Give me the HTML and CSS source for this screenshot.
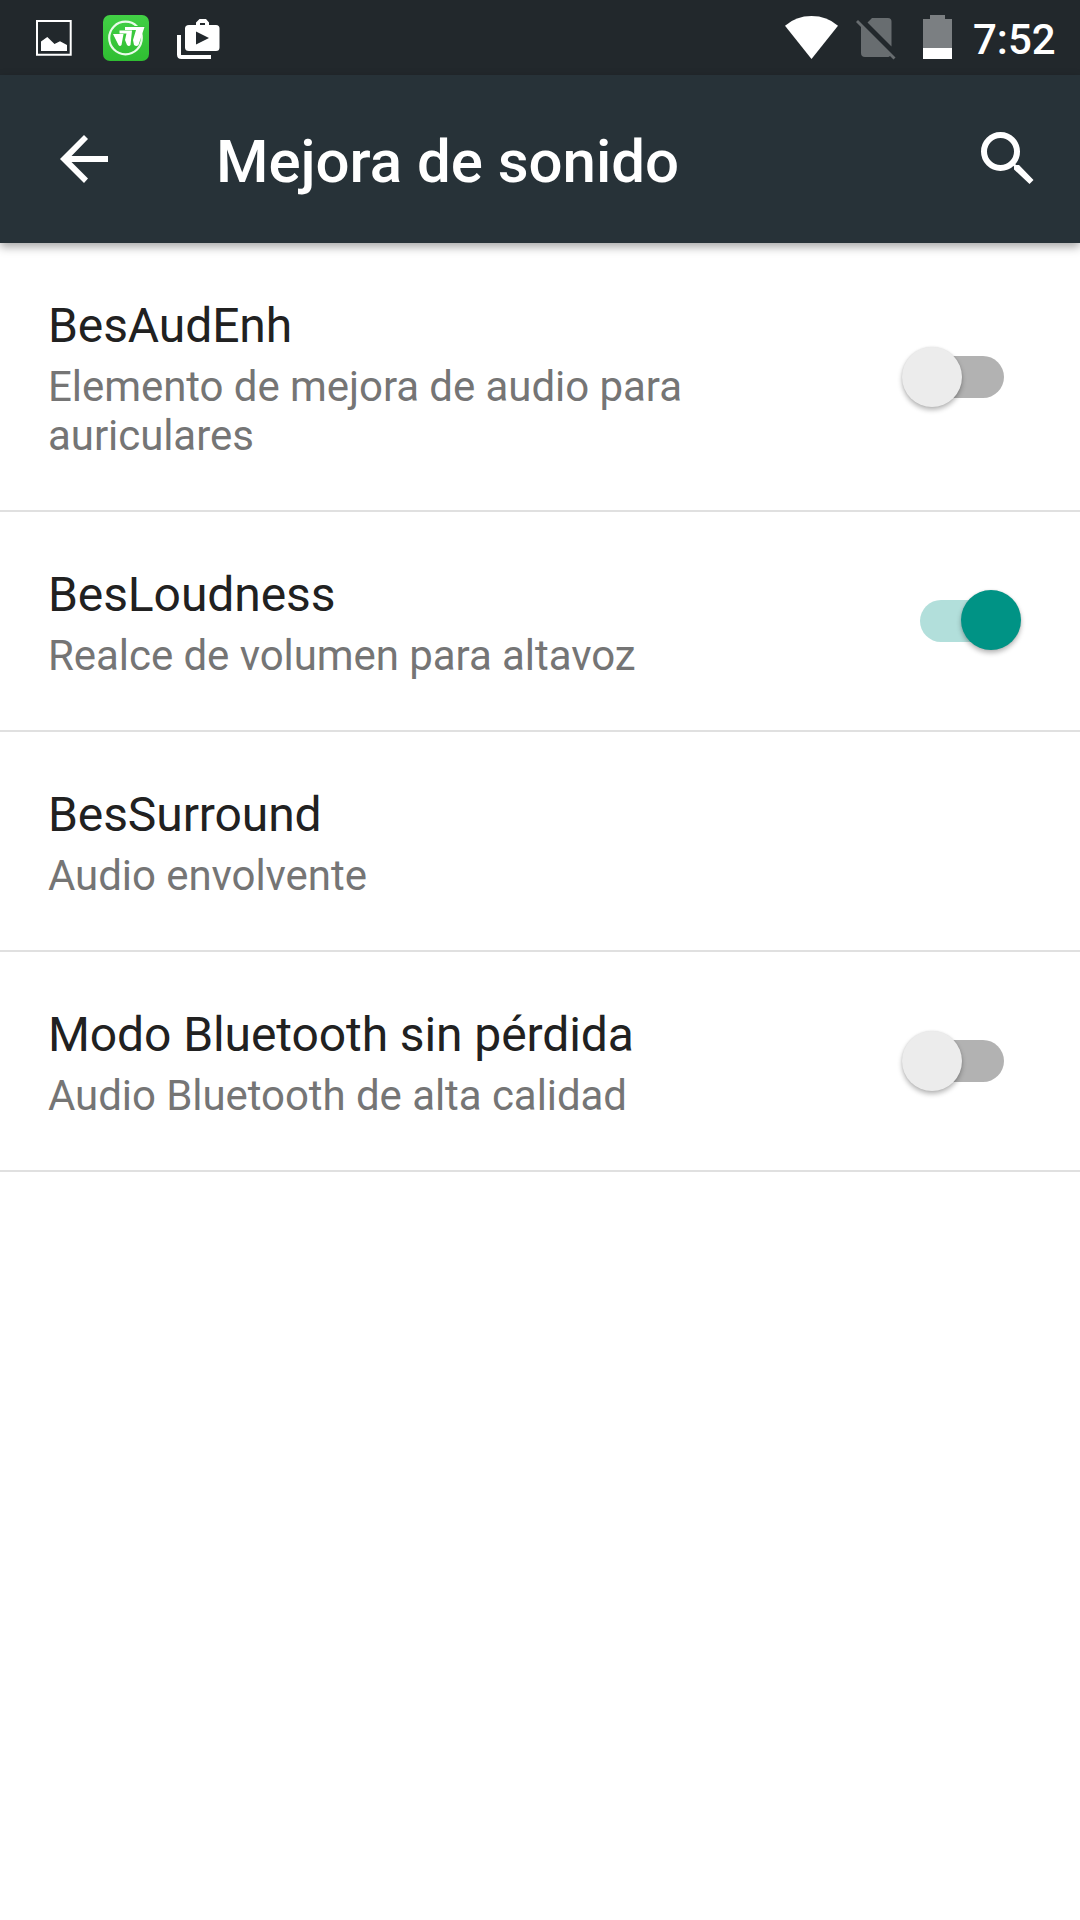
FILE: index.html
```html
<!DOCTYPE html>
<html lang="es">
<head>
<meta charset="utf-8">
<title>Mejora de sonido</title>
<link rel="stylesheet" href="styles.css">
</head>
<body>
<div class="status-bar">
  <div class="notifications">
    <svg class="icon-image" width="36" height="36" viewBox="0 0 36 36"><path d="M1 1H34.7V34.7H1Z" fill="none" stroke="#fff" stroke-width="2"/><path d="M5 31V21.5L11.3 17L18.5 24L24 21.2L31 25V31Z" fill="#fff"/></svg>
    <svg class="icon-app" width="46" height="46" viewBox="0 0 46 46">
      <defs><linearGradient id="leaf" x1="0" y1="0" x2="0" y2="1"><stop offset="0" stop-color="#42d045"/><stop offset="1" stop-color="#2fbe32"/></linearGradient></defs>
      <rect width="46" height="46" rx="7" fill="url(#leaf)"/>
      <circle cx="22.5" cy="23" r="16.3" fill="none" stroke="#e9fbe9" stroke-width="2.2"/>
      <path d="M30 11H42V16H38Z" fill="#38c53b"/>
      <path fill="#fff" d="M10 19H20.500L18.500 30Q17 32 15.500 30ZM16.500 15.500H29L27.500 30Q26 32 24 30L22 25L23.500 18.500H16.500ZM22 12H41.500L35.500 30Q33.500 32 31 30L30 25L33 15H22Z"/>
    </svg>
    <svg class="icon-bag" width="43" height="41" viewBox="0 0 43 41"><path d="M2 17V36.5Q2 39 4.500 39H34" fill="none" stroke="#fff" stroke-width="4"/><path fill="#fff" fill-rule="evenodd" d="M12 7H19V4.500L22.500 1H29L32 4.500V7H39Q42.500 7 42.500 10.500V29.500Q42.500 33 39 33H12Q8 33 8 29.500V10.500Q8 7 12 7ZM23 5V7H28V5ZM19 13.500V26.500L32 20Z"/></svg>
  </div>
  <div class="system">
    <svg class="icon-wifi" width="54" height="43" viewBox="0 0 54 43"><path d="M0 9.700Q11 0 26.500 0T53 9.700L26.500 43Z" fill="#fff"/></svg>
    <svg class="icon-sim" width="40" height="43" viewBox="0 0 40 43"><path fill="#686d70" d="M11.500 5.500L16 1H32Q35.500 1 35.500 4.500V29.500ZM5 9.500L34 38.500Q33.500 40 32 40H9Q5 40 5 36ZM0 5L2 3L39.500 40.500L37.500 42.500Z"/></svg>
    <svg class="icon-battery" width="29" height="44" viewBox="0 0 29 44"><path fill="#7b7f82" d="M7 0H22V4H29V33H0V4H7Z"/><path fill="#fff" d="M0 33H29V44H0Z"/></svg>
    <span class="clock">7:52</span>
  </div>
</div>
<header class="app-bar">
  <svg class="back" width="48" height="48" viewBox="0 0 48 48"><path fill="#fff" d="M48 21V27H11.500L28 43.500L24 48L0 24L24 0L28 4L11.500 21Z"/></svg>
  <h1 class="app-title">Mejora de sonido</h1>
  <svg class="search" width="53" height="53" viewBox="0 0 53 53"><circle cx="19.500" cy="19.500" r="16.500" fill="none" stroke="#fff" stroke-width="6"/><path fill="#fff" d="M33 37.500V34.500L31 32.500L33 30.500L35 33H38L52.500 48L48.500 52Z"/></svg>
</header>
<main class="settings">
  <section class="row">
    <div class="text"><h2 class="name">BesAudEnh</h2><p class="summary">Elemento de mejora de audio para auriculares</p></div>
    <div class="switch"><span class="track"></span><span class="thumb"></span></div>
  </section>
  <section class="row">
    <div class="text"><h2 class="name">BesLoudness</h2><p class="summary">Realce de volumen para altavoz</p></div>
    <div class="switch on"><span class="track"></span><span class="thumb"></span></div>
  </section>
  <section class="row">
    <div class="text"><h2 class="name">BesSurround</h2><p class="summary">Audio envolvente</p></div>
  </section>
  <section class="row">
    <div class="text"><h2 class="name">Modo Bluetooth sin pérdida</h2><p class="summary">Audio Bluetooth de alta calidad</p></div>
    <div class="switch"><span class="track"></span><span class="thumb"></span></div>
  </section>
</main>
</body>
</html>
```

FILE: styles.css
```css
* { box-sizing: border-box; }
body { margin: 0; min-height: 1920px; background: #fff; font-family: Roboto, sans-serif; }
h1, h2, p { margin: 0; font-weight: 400; }
svg { display: block; flex: none; }

.status-bar { display: flex; justify-content: space-between; height: 75px; padding: 0 25px 0 36px; background: #22282c; }
.notifications, .system { display: flex; align-items: flex-start; }
.icon-image { margin-top: 20px; }
.icon-app { margin: 15px 0 0 31px; }
.icon-bag { margin: 18px 0 0 28px; }
.icon-wifi { margin-top: 16px; }
.icon-sim { margin: 17px 0 0 17px; }
.icon-battery { margin: 15px 0 0 27px; }
.clock { width: 82px; margin: 15px 0 0 21px; color: #fff; font-size: 42px; font-weight: 500; line-height: 49px; white-space: nowrap; }

.app-bar { display: flex; height: 168px; padding: 0 46px 0 60px; background: #273238; box-shadow: 0 4px 9px rgba(0, 0, 0, .34); }
.back { margin-top: 60px; }
.app-title { flex: 1; margin: 51px 0 0 108px; color: #fff; font-size: 60px; font-weight: 500; line-height: 71px; letter-spacing: -.03px; }
.search { margin-top: 57px; }

.row { display: flex; align-items: center; justify-content: space-between; padding-right: 58px; border-bottom: 2px solid #e0e0e0; }
.text { width: 800px; padding: 54px 0 50px 48px; }
.name { color: #212121; font-size: 48px; line-height: 57px; letter-spacing: -.09px; }
.summary { width: 720px; margin-top: 8px; color: #757575; font-size: 42px; line-height: 49px; letter-spacing: -.06px; }

.switch { position: relative; width: 120px; height: 60px; padding: 9px 18px; }
.track { display: block; height: 42px; border-radius: 21px; background: #b2b2b2; }
.thumb { position: absolute; top: 0; left: 0; width: 60px; height: 60px; border-radius: 50%; background: #ececec; box-shadow: 0 3px 5px rgba(0, 0, 0, .28), 0 0 2px rgba(0, 0, 0, .1); }
.on .track { background: #b2dfdb; }
.on .thumb { top: -1px; left: 59px; background: #009385; }
```
